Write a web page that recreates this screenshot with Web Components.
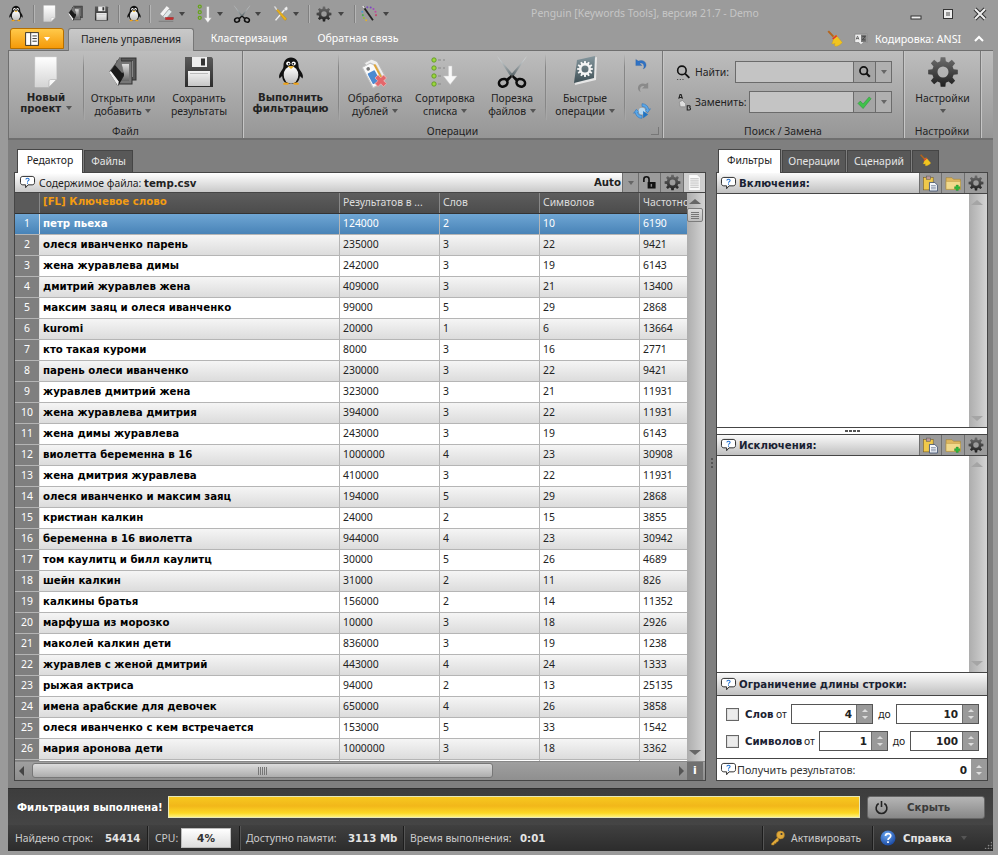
<!DOCTYPE html>
<html lang="ru"><head><meta charset="utf-8"><title>Penguin</title>
<style>
html,body{margin:0;padding:0;background:#9a9a9a}
body{width:998px;height:855px;overflow:hidden;font:10.400px "Noto Sans","Liberation Sans",sans-serif;color:#222}
</style></head><body>
<k-app>
  <k-titlebar slot="title"></k-titlebar>
  <k-tabrow slot="tabs"></k-tabrow>
  <k-ribbon slot="ribbon">
    <k-group label="Файл" w="234">
      <k-rbtn icon="page" w="74" bold>Новый<br>проект <k-caret></k-caret></k-rbtn>
      <k-vsep></k-vsep>
      <k-rbtn icon="open" w="78">Открыть или<br>добавить <k-caret></k-caret></k-rbtn>
      <k-rbtn icon="floppy" w="74">Сохранить<br>результаты</k-rbtn>
    </k-group>
    <k-group label="Операции" w="420" corner>
      <k-rbtn icon="penguin" w="95" bold>Выполнить<br>фильтрацию</k-rbtn>
      <k-vsep></k-vsep>
      <k-rbtn icon="tags" w="72">Обработка<br>дублей <k-caret></k-caret></k-rbtn>
      <k-rbtn icon="sort" w="68">Сортировка<br>списка <k-caret></k-caret></k-rbtn>
      <k-rbtn icon="scissors" w="66">Порезка<br>файлов <k-caret></k-caret></k-rbtn>
      <k-vsep></k-vsep>
      <k-rbtn icon="quick" w="78">Быстрые<br>операции <k-caret></k-caret></k-rbtn>
      <k-vsep></k-vsep>
      <k-undo></k-undo>
    </k-group>
    <k-group label="Поиск / Замена" w="241"><k-search></k-search></k-group>
    <k-group label="Настройки" w="77"><k-rbtn icon="gear" w="77">Настройки<br><k-caret></k-caret></k-rbtn></k-group>
  </k-ribbon>
  <k-workspace slot="work">
    <k-editor slot="left"></k-editor>
    <k-side slot="right"></k-side>
  </k-workspace>
  <k-progress slot="progress"></k-progress>
  <k-status slot="status"></k-status>
</k-app>
<script>
function gearPath(cx,cy,R,r,h,n){
  let d='';const st=Math.PI*2/n;
  for(let i=0;i<n;i++){const a=i*st-Math.PI/2;
    const pts=[[r,a-st*.33],[R,a-st*.2],[R,a+st*.2],[r,a+st*.33]];
    pts.forEach((p,j)=>{d+=(i===0&&j===0?'M':'L')+(cx+p[0]*Math.cos(p[1])).toFixed(2)+' '+(cy+p[0]*Math.sin(p[1])).toFixed(2)});
  }
  d+='Z M'+(cx+h)+' '+cy+'A'+h+' '+h+' 0 1 0 '+(cx-h)+' '+cy+'A'+h+' '+h+' 0 1 0 '+(cx+h)+' '+cy+'Z';
  return d;
}
const GR=(id,a,b,c)=>`<linearGradient id="${id}" x1="0" y1="0" x2="0" y2="1"><stop offset="0" stop-color="${a}"/>${c?`<stop offset=".5" stop-color="${c}"/>`:''}<stop offset="1" stop-color="${b}"/></linearGradient>`;
const ICONS={
penguin:`<defs>${GR('b','#fff','#bdbdbd')}</defs><path d="M16 1.500c-5 0-7.500 4-7.500 8 0 2-.6 3.300-2.200 5.500C4 18 3.600 21 4.500 22.500l2.600-2.600C7.600 25 10 28 16 28s8.400-3 8.900-8.100l2.600 2.600c.9-1.500.5-4.500-1.800-7.500-1.600-2.200-2.200-3.500-2.200-5.500 0-4-2.500-8-7.500-8z" fill="#111"/><ellipse cx="16" cy="19" rx="7.300" ry="8.800" fill="url(#b)"/><circle cx="13.300" cy="7.500" r="2.100" fill="#fff"/><circle cx="18.700" cy="7.500" r="2.100" fill="#fff"/><circle cx="13.700" cy="7.800" r=".9" fill="#000"/><circle cx="18.300" cy="7.800" r=".9" fill="#000"/><path d="M12.800 10.200h6.400L16 13z" fill="#f3b21a"/><path d="M8 27.500c1-1.200 4-1.500 6-.5l-1 1.800H8.500zM24 27.500c-1-1.200-4-1.500-6-.5l1 1.800h4.500z" fill="#eda31c"/>`,
page:`<defs>${GR('p','#fff','#d4d4d4')}</defs><path d="M5 1h21.500v22.500L19 31H5z" fill="url(#p)" stroke="#d8d8d8" stroke-width=".5"/><path d="M26.500 23.500h-5.800c-1 0-1.700.7-1.700 1.700V31z" fill="#f7f7f7" stroke="#aaa" stroke-width=".6"/>`,
open:`<defs>${GR('o','#ddd','#666')}${GR('o2','#777','#000')}</defs><rect x="14" y="2" width="15" height="22" fill="#555" stroke="#333"/><rect x="17" y="5" width="9" height="16" fill="#d8d8d8"/><rect x="10" y="5" width="15" height="23" fill="#777" stroke="#333"/><rect x="13" y="8" width="9" height="17" fill="url(#o)"/><path d="M13 1 2 16l9 14 6-10z" fill="url(#o2)"/><path d="M2 16l9 14 .8-4.500L4 15z" fill="#eee"/><path d="M13 1 4 15l8 10 5-6z" fill="#1a1a1a"/><path d="M13 1 8 9l7 8 2-1z" fill="#999" opacity=".7"/>`,
floppy:`<defs>${GR('f','#5a5a5a','#2c2c2c')}${GR('f2','#f4f4f4','#c6c6c6')}</defs><path d="M2 1h26.500L30 2.500V31H2z" fill="url(#f)"/><rect x="9" y="1" width="15" height="10" fill="#ededed"/><rect x="18" y="2.500" width="4" height="7" fill="#333"/><rect x="5" y="15" width="22" height="15" fill="url(#f2)"/><rect x="7" y="17" width="18" height="1" fill="#bbb"/>`,
tags:`<g transform="rotate(-28 16 16)"><path d="M11 3h8l4 5v19h-12z" fill="#efefef" stroke="#bbb"/><path d="M7 6h9l4 5v18H7z" fill="#fafafa" stroke="#c4c4c4"/><circle cx="11.500" cy="10" r="1.800" fill="#777"/><rect x="8.500" y="14" width="8" height="12" rx="1" fill="#4d8ad0"/><rect x="18" y="9" width="2" height="15" fill="#e0a63a"/></g><path d="M19 19l2.800 2.800L24.500 19l3 3-2.800 2.800 2.800 2.800-3 3-2.700-2.800-2.800 2.800-3-3 2.800-2.800-2.800-2.800z" fill="#e4676b" stroke="#f2b6b6" stroke-width=".7"/>`,
tagsm:`<g transform="rotate(40 14 13)"><path d="M9 2h7v19H9z" fill="#f3f3f3" stroke="#888" stroke-width=".7"/><path d="M16 4h7v17h-7z" fill="#dfe9ea" stroke="#888" stroke-width=".7"/></g><rect x="15" y="22" width="14" height="4" fill="#cc2a2a" stroke="#7a1414" stroke-width=".5"/><path d="M3 29h26" stroke="#666" stroke-width="1"/>`,
sort:`<g fill="#9ad63c" stroke="#5a8f22" stroke-width=".8"><circle cx="5" cy="4" r="2.200"/><circle cx="5" cy="12" r="2.200"/><circle cx="5" cy="20" r="2.200"/><circle cx="5" cy="28" r="2.200"/></g><g stroke="#888" stroke-width="1.200"><path d="M9 4h3M14 4h2M9 12h3M14 12h2M9 20h3M9 28h3"/></g><path d="M19.500 10h3.500v10h5l-6.800 8.500L14.500 20h5z" fill="#f8f8f8" stroke="#ccc" stroke-width=".5"/>`,
sortm:`<g fill="none" stroke="#67a51a" stroke-width="2"><circle cx="6" cy="4" r="2.400"/><circle cx="6" cy="13" r="2.400"/><circle cx="6" cy="22" r="2.400"/></g><path d="M17 4h4v18h4l-6 8-6-8h4z" fill="#f6f6f6" stroke="#999" stroke-width=".6"/>`,
scissors:`<defs><linearGradient id="sb" x1="0" y1="0" x2="1" y2="1"><stop offset="0" stop-color="#dfe4e6"/><stop offset="1" stop-color="#5e6a6e"/></linearGradient><linearGradient id="sc" x1="1" y1="0" x2="0" y2="1"><stop offset="0" stop-color="#e8ecee"/><stop offset="1" stop-color="#4e5a5e"/></linearGradient></defs><path d="M1 0l16 18.500-2.500 2z" fill="url(#sb)"/><path d="M31 0 15 18.500l2.500 2z" fill="url(#sc)"/><g fill="none" stroke="#0c0c0c" stroke-width="2.600"><ellipse cx="7.200" cy="26.800" rx="4.400" ry="3.700" transform="rotate(-25 7.200 26.800)"/><ellipse cx="24.800" cy="26.800" rx="4.400" ry="3.700" transform="rotate(25 24.800 26.800)"/></g><path d="M10 23l5-4 1.500 1.500-4 4.500zM22 23l-5-4-1.500 1.500 4 4.500z" fill="#0c0c0c"/>`,
tools:`<path d="M7 28 24 8l2.500 2.500L9.500 30z" fill="#f0f0f0" stroke="#888" stroke-width=".6"/><path d="M29 3l-4 3v3l3 2 3-2c1-2.500 0-5-2-6z" fill="#eee" stroke="#999" stroke-width=".5"/><path d="M5 3l3-1 5 7-3 2z" fill="#ddd" stroke="#888" stroke-width=".5"/><path d="M10 10l3-2 16 17c1 2-1 4.500-3.500 3.500z" fill="#e8b01c" stroke="#a87c10" stroke-width=".6"/>`,
gear:`<defs>${GR('g','#6d6d6d','#1e1e1e')}</defs><path fill-rule="evenodd" fill="url(#g)" d="${gearPath(16,16,15,11,5.500,8)}"/>`,
magic:`<path d="M6 3 23 27" stroke="#222" stroke-width="3.200"/><path d="M5 2l2.800 4" stroke="#e0e0e0" stroke-width="3"/><g><circle cx="13" cy="4" r="1.800" fill="#7a4bc0"/><circle cx="19" cy="4.500" r="1.800" fill="#7a4bc0"/><circle cx="24" cy="7" r="1.800" fill="#a24ac0"/><circle cx="27.500" cy="12" r="1.800" fill="#c04aa0"/><circle cx="28.500" cy="18" r="1.800" fill="#c04a70"/><circle cx="4" cy="12" r="1.800" fill="#4a9ad0"/><circle cx="5" cy="18" r="1.800" fill="#4ab050"/><circle cx="7" cy="23" r="1.800" fill="#90c030"/><circle cx="11" cy="27" r="1.800" fill="#e0b030"/></g>`,
quick:`<defs>${GR('q','#85979e','#3f5056')}</defs><path d="M6 29 8 6l20-5-1 23z" fill="#e6e6e6"/><path d="M5 27 8 4 26 0l-1 22z" fill="url(#q)"/><path fill-rule="evenodd" fill="#f4f4f4" d="${gearPath(16,13,8,6,3.500,12)}"/>`,
undo:`<path d="M5 3v11h11l-4-4c3-1.500 7 0 7.500 5 .2 2-.3 3.500-1.500 5 4-1.500 6-5 5-9-1.300-5-7-7.500-13.500-5z" fill="#2f72c4" stroke="#2a5a9c" stroke-width=".5" transform="translate(0 3)"/>`,
redo:`<path d="M27 3v11H16l4-4c-3-1.500-7 0-7.500 5-.2 2 .3 3.500 1.500 5-4-1.500-6-5-5-9 1.300-5 7-7.500 13.500-5z" fill="#8a8a8a" transform="translate(0 3)"/>`,
refresh:`<path d="M16 3c6 0 11 4 12 10l3-1-5 7-5-5 3-.5C23 10 20 8 16 8z" fill="#5aa7e8" stroke="#2e73b8"/><path d="M16 29C10 29 5 25 4 19l-3 1 5-7 5 5-3 .5C9 22 12 24 16 24z" fill="#5aa7e8" stroke="#2e73b8"/><circle cx="16" cy="16" r="6" fill="#b7d9f2"/><path d="M18 16v13l9-7z" fill="#1f74c4"/>`,
find:`<circle cx="13" cy="12" r="8" fill="none" stroke="#111" stroke-width="3"/><path d="M19 18l8 8" stroke="#111" stroke-width="3.500"/><path d="M4 29h2M9 29h2M14 29h2" stroke="#444" stroke-width="2"/>`,
mag:`<circle cx="13" cy="13" r="8.500" fill="none" stroke="#111" stroke-width="4"/><path d="M19 19l8 8" stroke="#111" stroke-width="5"/>`,
check:`<path d="M2 18l5-5 6 6L26 4l4 4-17 21z" fill="#3fc24a" stroke="#1d8a2c"/>`,
broom:`<path d="M4 2l12 13" stroke="#b5651d" stroke-width="3.500"/><path d="M13 12l5-3 11 13c-3 4-8 7-13 7-1-1-1-3 0-5-2 1-4 1-6 0 2-2 3-6 3-12z" fill="#f2c520" stroke="#c79a10" stroke-width=".7"/><path d="M11 15l7-6 2 2-7 6z" fill="#d33"/>`,
az:`<path d="M2 5h28v19h-9l-5 5-5-5H2z" fill="#eee" stroke="#666"/><rect x="16" y="6" width="13" height="17" fill="#777"/><path d="M5 17l2.500-7h1l2.500 7M6 15h4M19 10h7l-7 8h7" stroke="#333" stroke-width="1.500" fill="none"/>`,
ab:`<path d="M7 9 9.500 1h2L14 9M8.500 6.500h4" fill="none" stroke="#222" stroke-width="2"/><path d="M8 15l6-3 6 6v6H10z" fill="#ddd" stroke="#777"/><path d="M23 22h4c2 0 2 3 0 3.500 3 0 3 4.500 0 4.500h-4z" fill="none" stroke="#222" stroke-width="2"/>`,
bubble:`<path d="M6 3h20c3 0 5 2 5 5v8c0 3-2 5-5 5h-9l-5 6v-6H6c-3 0-5-2-5-5V8c0-3 2-5 5-5z" fill="#fff" stroke="#222" stroke-width="2"/><path d="M12.500 9.500c0-3.500 7-3.500 7 0 0 2.500-3.500 2.500-3.500 5M16 16v2.500" fill="none" stroke="#1f6fd0" stroke-width="2.200"/>`,
lock:`<rect x="12" y="15" width="17" height="14" rx="1" fill="#111"/><rect x="18.500" y="19" width="3" height="6" fill="#888"/><path d="M4 15V9c0-7 11-7 11 0v6" fill="none" stroke="#111" stroke-width="3.500"/>`,
doc:`<path d="M5 1h16l6 6v24H5z" fill="#fafafa" stroke="#bbb"/><path d="M8 9h16M8 13h16M8 17h16M8 21h16M8 25h16" stroke="#999" stroke-width="1.200"/>`,
clip:`<rect x="3" y="5" width="18" height="23" fill="#f0c94a" stroke="#7a5c14"/><rect x="8" y="2" width="8" height="6" fill="#b99" stroke="#555"/><path d="M14 14h10l5 5v11H14z" fill="#f4f6fa" stroke="#33486b" stroke-width="1.500"/><path d="M17 20h9M17 23h9M17 26h9" stroke="#33486b"/>`,
folder:`<path d="M2 5h11l3 3h13v19H2z" fill="#dfb860" stroke="#a0802e"/><path d="M2 12h27v15H2z" fill="#f1d98c" stroke="#b89540"/><path d="M21 19h4v3h3v4h-3v3h-4v-3h-3v-4h3z" fill="#2cb83a" stroke="#1e7f27" stroke-width=".7"/>`,
power:`<path d="M10 7.500a11.500 11.500 0 1 0 12 0M16 2v13" fill="none" stroke="#222" stroke-width="3.400"/>`,
key:`<circle cx="21" cy="10" r="8" fill="#e0a93a" stroke="#9c7120"/><circle cx="23" cy="8" r="2.200" fill="#3a3a3a"/><path d="M15 15 3 27v3h5l1-3h3l1-3h2l3-4z" fill="#e0a93a" stroke="#9c7120"/>`,
help:`<defs><radialGradient id="h" cx=".4" cy=".3" r=".8"><stop offset="0" stop-color="#6aa7f0"/><stop offset="1" stop-color="#123f9a"/></radialGradient></defs><circle cx="16" cy="16" r="15" fill="url(#h)"/><path d="M11 12c0-6.500 10.500-6.500 10.500-.5 0 4.500-5.500 4.500-5.500 8.500M16 22.500V26" fill="none" stroke="#fff" stroke-width="3.400"/>`,
layout:`<rect x="1.500" y="1.500" width="29" height="29" fill="#fff" stroke="#222" stroke-width="2"/><path d="M13 1.500v29" stroke="#222" stroke-width="2"/><path d="M17 9h10M17 15h10M17 21h10" stroke="#222" stroke-width="2"/>`
};
const BOLD='bold 10.200px "DejaVu Sans",sans-serif';
function def(name,css,html,extra){
  customElements.define(name,class extends HTMLElement{
    connectedCallback(){
      if(this.shadowRoot)return;
      const s=this.attachShadow({mode:'open'});
      const c=typeof css==='function'?css(this):css;
      s.innerHTML='<style>'+c+'</style>'+(typeof html==='function'?html(this):html);
      if(extra)extra(this,s);
    }
  });
}
def('k-icon',e=>{const z=e.getAttribute('s')||16;return `:host{display:inline-block;width:${z}px;height:${z}px;flex:none;line-height:0}svg{width:100%;height:100%;display:block;overflow:visible}`},
  e=>`<svg viewBox="0 0 32 32" xmlns="http://www.w3.org/2000/svg">${ICONS[e.getAttribute('n')]||''}</svg>`);
def('k-caret',`:host{display:inline-block;width:0;height:0;border:3px solid transparent;border-top:4px solid var(--caret,#555);border-bottom:0;vertical-align:2px;margin-left:1px}`,'');
def('k-vsep',`:host{display:block;width:1px;height:66px;margin-top:3px;flex:none;background:linear-gradient(#9a9a9a00,#868686 20%,#868686 80%,#9a9a9a00);box-shadow:1px 0 0 #c2c2c233}`,'');
def('k-app',`:host{display:flex;flex-direction:column;width:998px;height:855px}`,
  `<slot name="title"></slot><slot name="tabs"></slot><slot name="ribbon"></slot><slot name="work"></slot><slot name="progress"></slot><slot name="status"></slot><div style="height:4px;flex:none"></div>`);
def('k-titlebar',`:host{display:block;height:27px;flex:none;position:relative;background:#9b9b9b}
  .r{display:flex;align-items:center;height:27px;padding-left:8px;box-sizing:border-box}
  .i{display:flex;justify-content:center;align-items:center;flex:none}
  .s{width:1px;height:18px;background:#808080;box-shadow:1px 0 0 #b5b5b5;flex:none}
  k-caret{--caret:#444;margin:0;flex:none}
  k-icon{flex:none}
  .t{position:absolute;left:531px;top:6px;width:228px;text-align:center;color:#c6c6c6;font-size:10.400px;white-space:nowrap}
  .c{position:absolute;right:9px;top:7px;display:flex;gap:16px}
  .c svg{width:16px;height:14px;display:block}`,
  ()=>{
    const ic=(n,s,ml=0)=>`<k-icon n="${n}" s="${s}" style="margin-left:${ml}px"></k-icon>`;
    const sp=(ml)=>`<div class="s" style="margin-left:${ml}px"></div>`;
    const cr=(ml)=>`<k-caret style="margin-left:${ml}px"></k-caret>`;
    const box=(w,inner)=>`<div class="i" style="width:${w}px">${inner}</div>`;
    return `<div class="r">${box(16,ic('penguin',18))}${sp(9)}
    ${box(30,ic('page',17))}${box(22,ic('open',17))}${box(30,ic('floppy',15))}${sp(2)}
    ${box(30,ic('penguin',18))}${sp(0)}
    ${ic('tagsm',18,7)}${cr(4)}${ic('sortm',20,11)}${cr(1)}${ic('scissors',18,10)}${cr(4)}${ic('tools',17,10)}${cr(5)}${sp(9)}
    ${ic('gear',16,7)}${cr(6)}${sp(10)}${ic('magic',18,5)}${cr(5)}</div>
    <div class="t">Penguin [Keywords Tools], версия 21.7 - Demo</div>
    <div class="c"><svg viewBox="0 0 16 14"><rect x="2" y="9" width="10" height="3" fill="#eee" stroke="#333"/></svg><svg viewBox="0 0 16 14"><rect x="2.500" y="2.500" width="9" height="9" fill="none" stroke="#333" stroke-width="1"/><rect x="4" y="4" width="6" height="6" fill="none" stroke="#eee" stroke-width="2"/></svg><svg viewBox="0 0 16 14"><path d="M2 2l10 10M12 2 2 12" stroke="#333" stroke-width="4"/><path d="M2 2l10 10M12 2 2 12" stroke="#eee" stroke-width="2"/></svg></div>`;
  });
def('k-tabrow',`:host{display:flex;height:23px;flex:none;align-items:flex-end;padding-left:10px;position:relative;background:#9b9b9b;z-index:2;color:#fff}
  .app{width:54px;height:21px;margin-bottom:1px;box-sizing:border-box;border:1px solid #b56f00;border-radius:3px 3px 0 0;background:linear-gradient(#ffc94a,#f59a09);display:flex;align-items:center;justify-content:center;gap:4px;--caret:#fff}
  .tab{height:22px;line-height:21px;text-align:center}
  .on{width:126px;margin-left:4px;box-sizing:border-box;height:23px;border:1px solid #777;border-bottom:0;border-radius:3px 3px 0 0;background:linear-gradient(#c9c9c9,#b7b7b7);color:#222;position:relative;top:1px}
  .off{color:#fff}
  .right{position:absolute;left:826px;top:1px;height:21px;display:flex;align-items:center;color:#fff}`,
  `<div class="app"><k-icon n="layout" s="14"></k-icon><k-caret></k-caret></div><div class="tab on">Панель управления</div><div class="tab off" style="margin-left:1px;width:108px">Кластеризация</div><div class="tab off" style="width:108px;margin-left:1px;font-size:10.600px">Обратная связь</div>
  <div class="right"><k-icon n="broom" s="18"></k-icon><k-icon n="az" s="14" style="margin-left:10px"></k-icon><span style="margin-left:7px;width:99px;white-space:nowrap;font-size:10.700px">Кодировка: ANSI</span><svg width="10" height="8" viewBox="0 0 10 8" style="flex:none"><path d="M1 6l4-4 4 4" fill="none" stroke="#fff" stroke-width="2"/></svg></div>`);
def('k-ribbon',`:host{display:flex;height:90px;flex:none;margin:0 5px 0 8px;box-sizing:border-box;border:1px solid #6f6f6f;border-width:1px 0 2px 1px;background:linear-gradient(#bdbdbd,#969696)}`,`<slot></slot>`);
def('k-group',e=>`:host{display:flex;flex-direction:column;width:${e.getAttribute('w')}px;flex:none;border-right:1px solid #787878;box-shadow:1px 0 0 #c6c6c6;box-sizing:border-box;position:relative}
  .b{display:flex;height:72px;flex:none}.l{height:15px;line-height:16px;text-align:center;color:#222}
  .cr{position:absolute;right:3px;bottom:3px;width:7px;height:7px;border:1px solid #777;border-width:0 1px 1px 0}`,
  e=>`<div class="b"><slot></slot></div><div class="l">${e.getAttribute('label')}</div>${e.hasAttribute('corner')?'<div class="cr"></div>':''}`);
def('k-rbtn',e=>`:host{display:flex;flex-direction:column;align-items:center;width:${e.getAttribute('w')}px;flex:none;text-align:center;line-height:13px;color:#222;${e.hasAttribute('bold')?'font:'+BOLD+';':''}}
  k-icon{margin:5px 0 4px}`,
  e=>`<k-icon n="${e.getAttribute('icon')}" s="32"></k-icon><div><slot></slot></div>`);
def('k-undo',`:host{display:flex;flex-direction:column;align-items:center;width:34px;flex:none;gap:5px;padding-top:5px}`,
  `<k-icon n="undo" s="18"></k-icon><k-icon n="redo" s="18"></k-icon><k-icon n="refresh" s="18"></k-icon>`);
def('k-search',`:host{display:flex;flex-direction:column;gap:8px;padding:10px 0 0 12px;color:#222}
  .r{display:flex;align-items:center;height:22px}
  .f{height:22px;box-sizing:border-box;border:1px solid #6b6b6b;background:#c4c4c4}
  .b{width:22px;height:22px;box-sizing:border-box;border:1px solid #6b6b6b;border-left:0;background:#a5a5a5;display:flex;align-items:center;justify-content:center}
  .d{width:16px;height:22px;box-sizing:border-box;border:1px solid #6b6b6b;border-left:0;background:#b0b0b0;display:flex;align-items:center;justify-content:center;--caret:#666}`,
  `<div class="r"><k-icon n="find" s="17"></k-icon><span style="margin:0 5px 0 3px;width:35px">Найти:</span><div class="f" style="width:119px"></div><div class="b"><k-icon n="mag" s="14"></k-icon></div><div class="d"><k-caret></k-caret></div></div>
   <div class="r"><k-icon n="ab" s="17"></k-icon><span style="margin:0 3px 0 3px;width:51px">Заменить:</span><div class="f" style="width:105px"></div><div class="b"><k-icon n="check" s="15"></k-icon></div><div class="d"><k-caret></k-caret></div></div>`);
def('k-workspace',`:host{display:flex;flex:1;min-height:0;margin:0 5px 0 8px;padding:8px 0 7px 6px;gap:10px;background:#7f7f7f;position:relative}
  ::slotted([slot=left]){width:692px}::slotted([slot=right]){width:272px}
  .g{position:absolute;left:703px;top:318px;width:2px;height:12px;background:repeating-linear-gradient(#555 0 2px,transparent 2px 4px)}`,
  `<slot name="left"></slot><div class="g"></div><slot name="right"></slot>`);
def('k-ptabs',`:host{display:flex;height:24px;align-items:flex-end;padding-left:2px;gap:1px;flex:none;position:relative;z-index:1}`,`<slot></slot>`);
def('k-ptab',e=>`:host{display:block;height:${e.hasAttribute('on')?24:22}px;width:${e.getAttribute('w')}px;box-sizing:border-box;border:1px solid #454545;border-bottom:0;line-height:${e.hasAttribute('on')?'21px':'20px'};text-align:center;${e.hasAttribute('on')?'background:#fff;color:#222;margin-bottom:-1px;padding-bottom:1px;':'background:#585858;color:#e6e6e6;'}}`,`<slot></slot>`);
def('k-scroll',e=>`:host{display:flex;flex-direction:column;align-items:center;width:18px;flex:none;background:linear-gradient(90deg,#adadad,#d4d4d4);box-sizing:border-box;position:relative}
  .u,.d{width:0;height:0;border:6px solid transparent;margin-left:-2px}
  .u{border-bottom:5px solid ${e.getAttribute('c')||'#8a8a8a'};border-top:0;margin-top:6px}
  .d{border-top:5px solid ${e.getAttribute('c')||'#8a8a8a'};border-bottom:0;margin-bottom:6px}
  .sp{flex:1}.th{width:16px;height:14px;box-sizing:border-box;border:1px solid #7c7c7c;border-radius:2px;background:linear-gradient(#dcdcdc,#bdbdbd);margin:4px 2px 0 0;display:flex;flex-direction:column;justify-content:center;align-items:center;gap:1px}
  .th i{display:block;width:8px;height:1px;background:#777}`,
  e=>`<div class="u"></div>${e.hasAttribute('thumb')?'<div class="th"><i></i><i></i><i></i><i></i></div>':''}<div class="sp"></div><div class="d"></div>`);
const DATA=`петр пьеха|124000|2|10|6190
олеся иванченко парень|235000|3|22|9421
жена журавлева димы|242000|3|19|6143
дмитрий журавлев жена|409000|3|21|13400
максим заяц и олеся иванченко|99000|5|29|2868
kuromi|20000|1|6|13664
кто такая куроми|8000|3|16|2771
парень олеси иванченко|230000|3|22|9421
журавлев дмитрий жена|323000|3|21|11931
жена журавлева дмитрия|394000|3|22|11931
жена димы журавлева|243000|3|19|6143
виолетта беременна в 16|1000000|4|23|30908
жена дмитрия журавлева|410000|3|22|11931
олеся иванченко и максим заяц|194000|5|29|2868
кристиан калкин|24000|2|15|3855
беременна в 16 виолетта|944000|4|23|30942
том каулитц и билл каулитц|30000|5|26|4689
шейн калкин|31000|2|11|826
калкины братья|156000|2|14|11352
марфуша из морозко|10000|3|18|2926
маколей калкин дети|836000|3|19|1238
журавлев с женой дмитрий|443000|4|24|1333
рыжая актриса|94000|2|13|25135
имена арабские для девочек|650000|4|26|3858
олеся иванченко с кем встречается|153000|5|33|1542
мария аронова дети|1000000|3|18|3362
||||`.split('\n').map(l=>l.split('|'));
def('k-editor',`:host{display:flex;flex-direction:column}
  .p{flex:1;min-height:0;display:flex;flex-direction:column;border:1px solid #454545;background:#9a9a9a}
  .tb{height:19px;flex:none;display:flex;align-items:stretch;background:linear-gradient(#fff,#c9c9c9);border-bottom:1px solid #454545}
  .tb .t{flex:1;display:flex;align-items:center;padding-left:5px;gap:4px;color:#222}
  b{font:${BOLD};color:#222}
  .btn{display:flex;align-items:center;justify-content:center;background:#9b9b9b;border-left:1px solid #6e6e6e}
  .mid{flex:1;min-height:0;display:flex}
  .grid{flex:none;width:672px;overflow:hidden;background:#fff}
  .row{display:grid;grid-template-columns:25px 300px 100px 100px 100px 100px;height:21px;box-sizing:border-box;border-bottom:1px solid #b5b5b5;line-height:19px;width:725px}
  .row>div{border-right:1px solid #b5b5b5;padding-left:3px;box-sizing:border-box;overflow:hidden;white-space:nowrap;text-overflow:clip}
  .row>div:first-child{background:#7f7f7f;color:#fff;text-align:center;padding:0;border-right:1px solid #e0e0e0}
  .row>div:nth-child(2){font:bold 10.200px/19px "DejaVu Sans",sans-serif;color:#000}
  .row:nth-child(2n+3){background:linear-gradient(#f5f5f5,#dcdcdc)}
  .h{background:linear-gradient(#5d5d5d,#4c4c4c);color:#ddd;border-bottom:1px solid #333;line-height:18px}
  .h>div{border-right:1px solid #888}.h>div:first-child{background:#5a5a5a;border-right:1px solid #888}
  .row.h>div:nth-child(2){color:#f39c12;line-height:18px}
  .row.sel{background:linear-gradient(#6fa6d4,#4883b7);color:#fff}
  .row.sel>div:first-child{background:linear-gradient(#6fa6d4,#4883b7);}
  .row.sel>div:nth-child(2){color:#fff}
  .sb{height:19px;flex:none;display:flex;align-items:center;background:linear-gradient(#9f9f9f,#8f8f8f);border-top:1px solid #888;box-sizing:border-box;padding-left:4px;position:relative}
  .a{width:0;height:0;border:5px solid transparent;flex:none}
  .hth{position:absolute;left:17px;top:1px;width:461px;height:15px;box-sizing:border-box;border:1px solid #777;border-radius:3px;background:linear-gradient(#dcdcdc,#adadad);display:flex;align-items:center;justify-content:center;gap:1px}
  .hth i{width:1px;height:8px;background:#777}
  .i{position:absolute;left:672px;top:0;width:16px;height:18px;background:#707070;color:#fff;text-align:center;font:bold 11px/18px "DejaVu Sans",sans-serif}`,
  ()=>{
    const rows=DATA.map((r,i)=>`<div class="row${i===0?' sel':''}"><div>${r[0]||r[1]?i+1:''}</div><div>${r[0]}</div><div>${r[1]}</div><div>${r[2]}</div><div>${r[3]}</div><div>${r[4]}</div></div>`).join('');
    return `<k-ptabs style="padding-left:3px"><k-ptab on w="66">Редактор</k-ptab><k-ptab w="49">Файлы</k-ptab></k-ptabs>
    <div class="p"><div class="tb"><div class="t"><k-icon n="bubble" s="15"></k-icon><span>Содержимое файла: <b>temp.csv</b></span></div>
    <b style="line-height:19px;padding-right:1px">Auto</b>
    <div class="btn" style="width:15px;--caret:#666"><k-caret></k-caret></div><div class="btn" style="width:21px"><k-icon n="lock" s="15"></k-icon></div><div class="btn" style="width:22px"><k-icon n="gear" s="17"></k-icon></div><div class="btn" style="width:21px;background:#cfcfcf"><k-icon n="doc" s="17"></k-icon></div></div>
    <div class="mid"><div class="grid"><div class="row h"><div></div><div>[FL] Ключевое слово</div><div>Результатов в ...</div><div>Слов</div><div>Символов</div><div>Частотность</div></div>${rows}</div><k-scroll thumb c="#666"></k-scroll></div>
    <div class="sb"><div class="a" style="border-right-color:#444;border-left:0"></div><div class="hth"><i></i><i></i><i></i><i></i><i></i></div><div class="a" style="border-left-color:#555;border-right:0;position:absolute;left:664px;top:4px"></div><div class="i">i</div></div></div>`;
  });
def('k-phead',`:host{display:flex;height:21px;flex:none;background:linear-gradient(#fafafa,#c0c0c0);border-bottom:1px solid #454545;box-sizing:border-box;align-items:stretch;color:#1a2233}
  .t{flex:1;display:flex;align-items:center;gap:3px;padding-left:4px;font:${BOLD}}
  .b{width:21px;display:flex;align-items:center;justify-content:center;background:#9b9b9b;border-left:1px solid #6e6e6e}
  .b+.b{width:22px}`,
  e=>`<div class="t"><k-icon n="bubble" s="15"></k-icon><slot></slot></div>${e.hasAttribute('btns')?'<div class="b"><k-icon n="clip" s="17"></k-icon></div><div class="b"><k-icon n="folder" s="17"></k-icon></div><div class="b"><k-icon n="gear" s="16"></k-icon></div>':''}`);
def('k-list',e=>`:host{display:flex;height:${e.getAttribute('h')}px;flex:none;background:#fff}.s{flex:1}`,`<div class="s"></div><k-scroll c="#a5a5a5"></k-scroll>`);
def('k-spin',e=>`:host{display:flex;height:20px;box-sizing:border-box;border:1px solid #555;background:#fff;flex:none;width:${e.getAttribute('w')}px}
  .v{flex:1;text-align:right;padding-right:4px;font:bold 10.500px/18px "DejaVu Sans",sans-serif;color:#222}
  .s{width:15px;background:#9a9a9a;border-left:1px solid #6e6e6e;display:flex;flex-direction:column;align-items:center;justify-content:center;gap:4px}
  .s i{width:0;height:0;border:3px solid transparent}
  .s i:first-child{border-bottom:3px solid #ddd;border-top:0}.s i:last-child{border-top:3px solid #ddd;border-bottom:0}`,
  e=>`<div class="v">${e.getAttribute('v')}</div><div class="s"><i></i><i></i></div>`);
def('k-limit',e=>`:host{display:flex;align-items:center;height:20px;flex:none;padding-left:9px}
  .c{width:13px;height:13px;box-sizing:border-box;border:1px solid #666;background:#ececec;margin-right:6px;flex:none;box-shadow:inset 0 0 0 1px #ddd}
  b{font:${BOLD};color:#1a2233;width:${e.getAttribute('lw')}px;flex:none;white-space:nowrap}
  span{color:#222;flex:none}`,
  e=>`<div class="c"></div><b>${e.getAttribute('l')}</b><span style="width:15px">от</span><k-spin v="${e.getAttribute('a')}" w="${e.getAttribute('w')}"></k-spin><span style="width:${e.getAttribute('g')}px;text-align:center">до</span><k-spin v="${e.getAttribute('b')}" w="${e.getAttribute('wb')}"></k-spin>`);
def('k-side',`:host{display:flex;flex-direction:column}
  .p{flex:1;min-height:0;display:flex;flex-direction:column;border:1px solid #454545;background:#fff}
  .sp{height:8px;flex:none;border-top:1px solid #454545;border-bottom:1px solid #454545;box-sizing:border-box;display:flex;justify-content:center;align-items:center;gap:1px;background:#fff}
  .sp i{width:3px;height:2px;background:#555}
  .l{height:63px;flex:none;border-bottom:1px solid #454545;display:flex;flex-direction:column;gap:7px;padding-top:8px;box-sizing:border-box}
  .r{display:flex;align-items:center;flex:1;min-height:0;padding-left:4px;gap:1px;color:#333;font-size:10.800px}
  .r b{font:bold 10.500px "DejaVu Sans",sans-serif;color:#222;margin-left:auto;padding-right:3px}
  .s{width:16px;height:100%;background:#9a9a9a;display:flex;flex-direction:column;align-items:center;justify-content:center;gap:4px}
  .s i{width:0;height:0;border:3px solid transparent}
  .s i:first-child{border-bottom:3px solid #ddd;border-top:0}.s i:last-child{border-top:3px solid #ddd;border-bottom:0}`,
  `<k-ptabs><k-ptab on w="63">Фильтры</k-ptab><k-ptab w="64">Операции</k-ptab><k-ptab w="64">Сценарий</k-ptab><k-ptab w="27"><k-icon n="broom" s="13" style="margin-top:3px"></k-icon></k-ptab></k-ptabs>
  <div class="p"><k-phead btns>Включения:</k-phead><k-list h="233"></k-list><div class="sp"><i></i><i></i><i></i><i></i></div>
  <k-phead btns>Исключения:</k-phead><k-list h="216"></k-list>
  <k-phead style="border-top:1px solid #454545;height:24px">Ограничение длины строки:</k-phead>
  <div class="l"><k-limit l="Слов" lw="31" a="4" b="10" w="82" g="23" wb="83"></k-limit><k-limit l="Символов" lw="59" a="1" b="100" w="69" g="22" wb="69"></k-limit></div>
  <div class="r"><k-icon n="bubble" s="15"></k-icon><span>Получить результатов:</span><b>0</b><div class="s"><i></i><i></i></div></div></div>`);
def('k-progress',`:host{display:flex;align-items:center;height:37px;flex:none;margin:0 5px 0 8px;background:linear-gradient(#3d3d3d,#454545);box-sizing:border-box;padding-left:9px;border-top:1px solid #2e2e2e}
  b{font:${BOLD};color:#fff;width:151px;flex:none;white-space:nowrap}
  .bar{width:692px;height:22px;box-sizing:border-box;border:1px solid #e8e8b8;background:linear-gradient(#f7c81f,#f2b71a 45%,#fdd823 80%,#fff27a);flex:none}
  .btn{width:118px;height:23px;margin-left:7px;box-sizing:border-box;border:1px solid #666;border-radius:3px;background:linear-gradient(#b5b5b5,#888);display:flex;align-items:center;flex:none;padding-left:6px;color:#3a3a3a;font:${BOLD}}`,
  `<b>Фильтрация выполнена!</b><div class="bar"></div><div class="btn"><k-icon n="power" s="15"></k-icon><span style="margin-left:18px">Скрыть</span></div>`);
def('k-status',`:host{display:flex;align-items:center;height:26px;flex:none;margin:0 5px 0 8px;background:linear-gradient(#404040,#2c2c2c);color:#ccc;padding-left:7px;box-sizing:border-box;white-space:nowrap;position:relative}
  b{font:${BOLD};color:#e4e4e4}
  .s{width:1px;height:24px;background:#1d1d1d;box-shadow:1px 0 0 #555;flex:none}
  .cpu{width:50px;height:20px;background:linear-gradient(#fff,#ddd);border:1px solid #bbb;box-sizing:border-box;text-align:center;font:bold 10.500px/18px "DejaVu Sans",sans-serif;color:#333;flex:none}
  .grip{position:absolute;right:1px;bottom:2px;width:8px;height:8px;background:radial-gradient(circle,#888 40%,transparent 50%) 0 0/3px 3px;clip-path:polygon(100% 0,100% 100%,0 100%)}`,
  `<span style="width:90px">Найдено строк:</span><b style="width:42px">54414</b><div class="s"></div><span style="margin-left:7px;width:26px">CPU:</span><div class="cpu">4%</div><div class="s" style="margin-left:8px"></div>
  <span style="margin-left:6px;width:102px">Доступно памяти:</span><b style="width:55px">3113 Mb</b><div class="s"></div>
  <span style="margin-left:6px;width:110px">Время выполнения:</span><b style="width:242px">0:01</b><div class="s"></div>
  <k-icon n="key" s="16" style="margin-left:7px"></k-icon><span style="margin-left:5px;width:81px">Активировать</span><div class="s"></div>
  <k-icon n="help" s="16" style="margin-left:7px"></k-icon><b style="margin-left:7px;width:50px">Справка</b><k-caret style="--caret:#555;margin-left:8px"></k-caret><div class="grip"></div>`);
</script>
</body></html>
